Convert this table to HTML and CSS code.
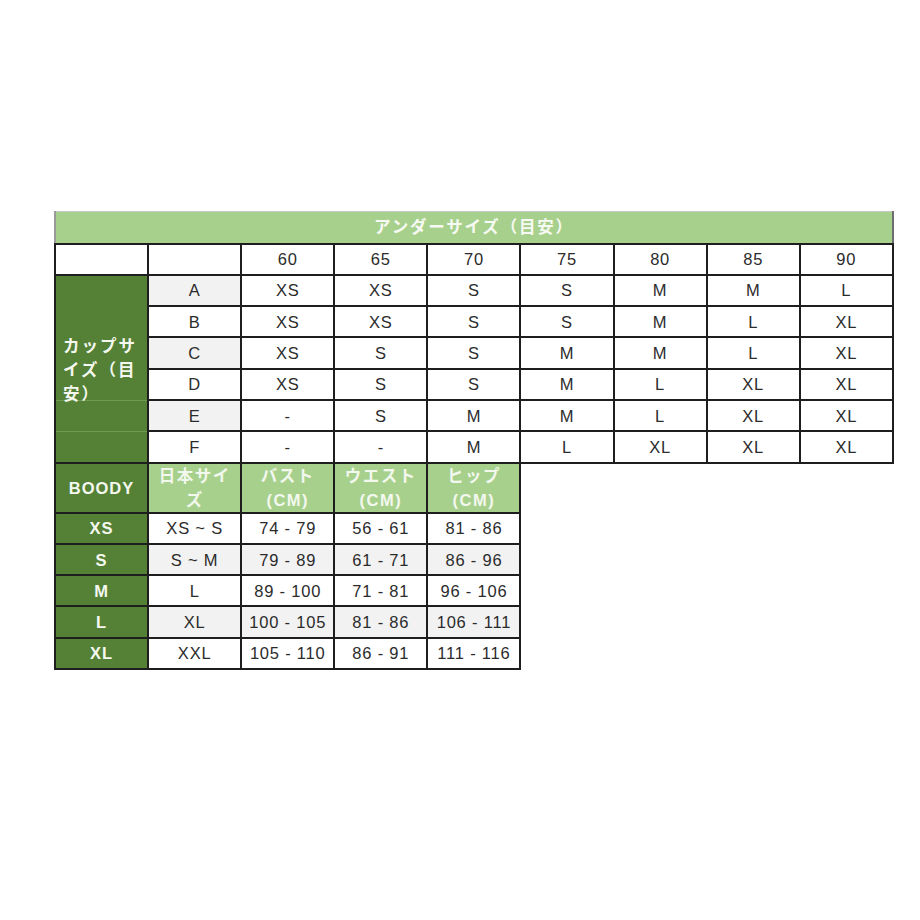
FILE: index.html
```html
<!DOCTYPE html>
<html lang="ja">
<head>
<meta charset="utf-8">
<title>サイズ表</title>
<link rel="stylesheet" href="styles.css">
</head>
<body>
<div class="page">
<table class="size">
  <colgroup>
    <col><col><col><col><col><col><col><col><col>
  </colgroup>
  <tr class="r-head">
    <td colspan="9" class="top-head">アンダーサイズ（目安）</td>
  </tr>
  <tr class="r">
    <td></td><td></td>
    <td>60</td><td>65</td><td>70</td><td>75</td><td>80</td><td>85</td><td>90</td>
  </tr>
  <tr class="r">
    <td rowspan="6" class="cup"><span class="cup-text">カップサイズ（目安）</span></td>
    <td class="alt">A</td><td>XS</td><td>XS</td><td>S</td><td>S</td><td>M</td><td>M</td><td>L</td>
  </tr>
  <tr class="r">
    <td>B</td><td>XS</td><td>XS</td><td>S</td><td>S</td><td>M</td><td>L</td><td>XL</td>
  </tr>
  <tr class="r">
    <td class="alt">C</td><td>XS</td><td>S</td><td>S</td><td>M</td><td>M</td><td>L</td><td>XL</td>
  </tr>
  <tr class="r">
    <td>D</td><td>XS</td><td>S</td><td>S</td><td>M</td><td>L</td><td>XL</td><td>XL</td>
  </tr>
  <tr class="r">
    <td class="alt">E</td><td>-</td><td>S</td><td>M</td><td>M</td><td>L</td><td>XL</td><td>XL</td>
  </tr>
  <tr class="r">
    <td>F</td><td>-</td><td>-</td><td>M</td><td>L</td><td>XL</td><td>XL</td><td>XL</td>
  </tr>
  <tr class="r-bhead">
    <td class="dark bold">BOODY</td>
    <td class="light">日本サイズ</td>
    <td class="light">バスト<br>(CM)</td>
    <td class="light">ウエスト<br>(CM)</td>
    <td class="light">ヒップ<br>(CM)</td>
  </tr>
  <tr class="r">
    <td class="dark bold">XS</td><td>XS ~ S</td><td>74 - 79</td><td>56 - 61</td><td>81 - 86</td>
  </tr>
  <tr class="r alt-row">
    <td class="dark bold">S</td><td>S ~ M</td><td>79 - 89</td><td>61 - 71</td><td>86 - 96</td>
  </tr>
  <tr class="r">
    <td class="dark bold">M</td><td>L</td><td>89 - 100</td><td>71 - 81</td><td>96 - 106</td>
  </tr>
  <tr class="r alt-row">
    <td class="dark bold">L</td><td>XL</td><td>100 - 105</td><td>81 - 86</td><td>106 - 111</td>
  </tr>
  <tr class="r">
    <td class="dark bold">XL</td><td>XXL</td><td>105 - 110</td><td>86 - 91</td><td>111 - 116</td>
  </tr>
</table>
</div>
</body>
</html>
```
FILE: styles.css
```css
html, body {
  margin: 0;
  padding: 0;
  background: #ffffff;
}

.page {
  padding: 211px 0 0 54px;
}

.size {
  border-collapse: collapse;
  table-layout: fixed;
  width: 838px;
  font-family: "Liberation Sans", "Noto Sans CJK JP", sans-serif;
  font-size: 16.5px;
  letter-spacing: 0.8px;
  color: #2b2b2b;
}

.size col {
  width: 93.1px;
}

.size td {
  border: 2px solid #1e1e1e;
  padding: 0;
  text-align: center;
  vertical-align: middle;
  line-height: 20px;
}

.r-head {
  height: 32px;
}

.r {
  height: 31.3px;
}

.r-bhead {
  height: 50px;
}

.top-head {
  background: #a8d08d;
  color: #f7faf3;
  font-weight: bold;
  letter-spacing: 1.8px;
  border-top: 1px solid #c8c8c8 !important;
  border-left-color: #9a9a9a !important;
  border-right-color: #6e6e6e !important;
}

.alt,
.alt-row td {
  background: #f2f2f2;
}

.alt-row td.dark {
  background: #548135;
}

.cup {
  background-color: #548135;
  background-image:
    linear-gradient(#6e9a52, #6e9a52),
    linear-gradient(#6e9a52, #6e9a52);
  background-size: 100% 1px, 100% 1px;
  background-position: 0 124px, 0 155px;
  background-repeat: no-repeat;
  color: #f4f8f0;
  font-weight: bold;
  letter-spacing: 2px;
  padding: 0 4px !important;
}

.cup-text {
  display: block;
  line-height: 24px;
  text-align: left;
  padding-left: 3px;
  margin-top: 2px;
}

.dark {
  background: #548135;
  color: #f4f8f0;
}

.bold {
  font-weight: bold;
  letter-spacing: 1px;
}

.light {
  background: #a8d08d;
  color: #f3f8ee;
  font-weight: bold;
  letter-spacing: 1.5px;
  line-height: 24px !important;
  padding: 0 5px !important;
}
```
